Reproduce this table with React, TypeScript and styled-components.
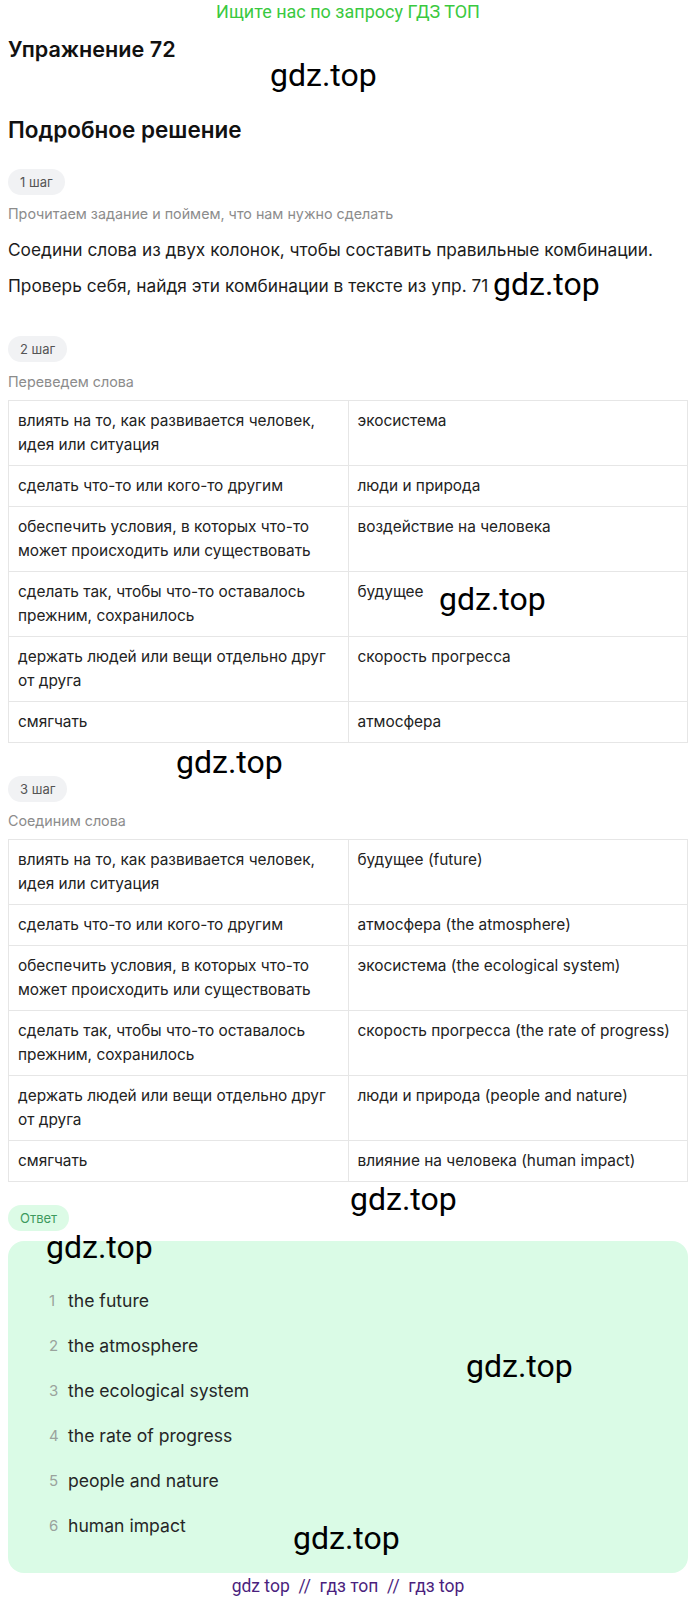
import React from 'react';
import styled, { createGlobalStyle } from 'styled-components';

const GlobalStyle = createGlobalStyle`
  html, body {
    margin: 0;
    padding: 0;
    background: #ffffff;
  }
  body {
    font-family: Inter, "Noto Sans", sans-serif;
    color: #1f1f1f;
  }
  * {
    box-sizing: border-box;
  }
`;

const Page = styled.div`
  position: relative;
  width: 700px;
  min-height: 1600px;
  padding: 0 12px 0 8px;
`;

const Banner = styled.div`
  text-align: center;
  font-family: Roboto, "Liberation Sans", sans-serif;
  font-size: 18px;
  line-height: 24px;
  color: #3ac940;
`;

const Title = styled.h1`
  margin: 12px 0 0;
  font-size: 21.6px;
  line-height: 26px;
  font-weight: 600;
  color: #111;
`;

const Subtitle = styled.h2`
  margin: 54px 0 0;
  font-size: 22.5px;
  line-height: 28px;
  font-weight: 600;
  color: #111;
`;

const Pill = styled.div<{ $tone?: 'gray' | 'green'; $top: number }>`
  display: inline-flex;
  align-items: center;
  height: 26px;
  padding: 0 12px;
  margin-top: ${({ $top }) => $top}px;
  border-radius: 13px;
  font-size: 13px;
  background: ${({ $tone }) => ($tone === 'green' ? '#dcfbe6' : '#f1f2f4')};
  color: ${({ $tone }) => ($tone === 'green' ? '#3d9a5e' : '#555')};
`;

const Caption = styled.div<{ $top: number }>`
  margin-top: ${({ $top }) => $top}px;
  font-size: 14.3px;
  line-height: 22px;
  color: #8c8c8c;
`;

const Paragraph = styled.p<{ $top: number }>`
  margin: ${({ $top }) => $top}px 0 0;
  font-size: 17.3px;
  line-height: 24px;
  color: #1c1c1c;
`;

const Table = styled.table`
  width: 100%;
  margin-top: 7px;
  border-collapse: collapse;
  table-layout: fixed;
`;

const Cell = styled.td`
  width: 50%;
  padding: 8px 9px;
  border: 1px solid #e6e6e6;
  vertical-align: top;
  font-size: 15.4px;
  line-height: 24px;
  color: #222;
`;

const AnswerBox = styled.div`
  margin-top: 10px;
  padding: 47px 0 35px 41px;
  border-radius: 16px;
  background: #dafbe6;
  display: flex;
  flex-direction: column;
  gap: 20px;
`;

const AnswerRow = styled.div`
  display: flex;
  align-items: center;
  height: 25px;
  line-height: 25px;
`;

const AnswerNum = styled.span`
  width: 19px;
  font-size: 15px;
  color: #9aa39d;
`;

const AnswerText = styled.span`
  font-size: 17.6px;
  color: #262626;
`;

const Footer = styled.div`
  margin-top: 1px;
  text-align: center;
  white-space: pre;
  font-family: Roboto, "Liberation Sans", sans-serif;
  font-size: 17.5px;
  line-height: 24px;
  color: #4b1f7e;
`;

const Watermark = styled.div`
  position: absolute;
  font-family: Roboto, "Liberation Sans", sans-serif;
  font-size: 32px;
  line-height: 34px;
  color: #000;
  pointer-events: none;
`;

const translate: [string, string][] = [
  ['влиять на то, как развивается человек, идея или ситуация', 'экосистема'],
  ['сделать что-то или кого-то другим', 'люди и природа'],
  ['обеспечить условия, в которых что-то может происходить или существовать', 'воздействие на человека'],
  ['сделать так, чтобы что-то оставалось прежним, сохранилось', 'будущее'],
  ['держать людей или вещи отдельно друг от друга', 'скорость прогресса'],
  ['смягчать', 'атмосфера'],
];

const matched: [string, string][] = [
  ['влиять на то, как развивается человек, идея или ситуация', 'будущее (future)'],
  ['сделать что-то или кого-то другим', 'атмосфера (the atmosphere)'],
  ['обеспечить условия, в которых что-то может происходить или существовать', 'экосистема (the ecological system)'],
  ['сделать так, чтобы что-то оставалось прежним, сохранилось', 'скорость прогресса (the rate of progress)'],
  ['держать людей или вещи отдельно друг от друга', 'люди и природа (people and nature)'],
  ['смягчать', 'влияние на человека (human impact)'],
];

const answers = [
  'the future',
  'the atmosphere',
  'the ecological system',
  'the rate of progress',
  'people and nature',
  'human impact',
];

// left edge, centre line
const marks: [number, number][] = [
  [270, 75],
  [493, 284],
  [439, 599],
  [176, 762],
  [350, 1199],
  [46, 1247],
  [466, 1366],
  [293, 1538],
];

const WordTable: React.FC<{ rows: [string, string][] }> = ({ rows }) => (
  <Table>
    <tbody>
      {rows.map(([a, b]) => (
        <tr key={a + b}>
          <Cell>{a}</Cell>
          <Cell>{b}</Cell>
        </tr>
      ))}
    </tbody>
  </Table>
);

const App: React.FC = () => {
  return (
    <Page>
      <GlobalStyle />
      <Banner>Ищите нас по запросу ГДЗ ТОП</Banner>
      <Title>Упражнение 72</Title>
      <Subtitle>Подробное решение</Subtitle>

      <Pill $top={25}>1 шаг</Pill>
      <Caption $top={8}>Прочитаем задание и поймем, что нам нужно сделать</Caption>
      <Paragraph $top={13}>Соедини слова из двух колонок, чтобы составить правильные комбинации.</Paragraph>
      <Paragraph $top={12}>Проверь себя, найдя эти комбинации в тексте из упр. 71</Paragraph>

      <Pill $top={38}>2 шаг</Pill>
      <Caption $top={9}>Переведем слова</Caption>
      <WordTable rows={translate} />

      <Pill $top={33}>3 шаг</Pill>
      <Caption $top={8}>Соединим слова</Caption>
      <WordTable rows={matched} />

      <Pill $tone="green" $top={23}>Ответ</Pill>
      <AnswerBox>
        {answers.map((a, i) => (
          <AnswerRow key={a}>
            <AnswerNum>{i + 1}</AnswerNum>
            <AnswerText>{a}</AnswerText>
          </AnswerRow>
        ))}
      </AnswerBox>

      <Footer>{'gdz top  //  гдз топ  //  гдз top'}</Footer>

      {marks.map(([x, y]) => (
        <Watermark key={`${x}-${y}`} style={{ left: x, top: y - 17 }}>
          gdz.top
        </Watermark>
      ))}
    </Page>
  );
};

export default App;
